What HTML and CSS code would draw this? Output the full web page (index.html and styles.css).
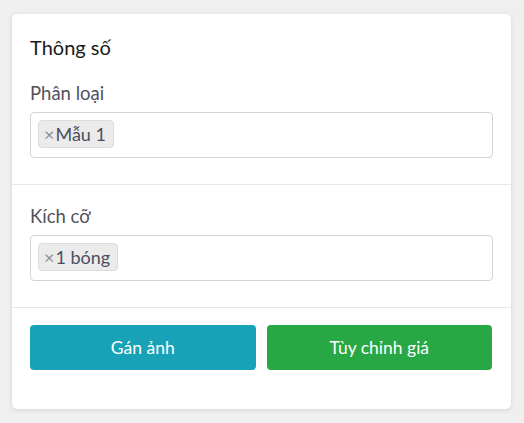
FILE: index.html
```html
<!DOCTYPE html>
<html lang="vi">
<head>
    <meta charset="UTF-8">
    <meta name="viewport" content="width=device-width, initial-scale=1.0">
    <title>Thông số</title>
    <link rel="stylesheet" href="styles.css">
</head>
<body>
    <div class="card">
        <div class="section">
            <h2>Thông số</h2>
            <label class="field-label">Phân loại</label>
            <div class="tag-input">
                <span class="tag"><span class="tag-remove">×</span>Mẫu 1</span>
            </div>
        </div>

        <div class="section">
            <label class="field-label">Kích cỡ</label>
            <div class="tag-input">
                <span class="tag"><span class="tag-remove">×</span>1 bóng</span>
            </div>
        </div>

        <div class="section actions">
            <button class="btn btn-info">Gán ảnh</button>
            <button class="btn btn-success">Tùy chỉnh giá</button>
        </div>
    </div>
</body>
</html>
```

FILE: styles.css
```css
* {
    margin: 0;
    padding: 0;
    box-sizing: border-box;
    font-family: Lato, 'Open Sans', sans-serif;
}
body {
    background-color: #efefef;
    padding: 14px 13px 14px 12px;
}
.card {
    background: #fff;
    border-radius: 5px;
    box-shadow: 0 1px 4px rgba(0, 0, 0, 0.12);
    padding-bottom: 39px;
}
.section {
    padding: 19px 18px 26px;
    border-bottom: 1px solid #e6e6e6;
}
.section h2 {
    font-size: 20px;
    font-weight: normal;
    line-height: 28px;
    color: #1a1a1a;
    margin-bottom: 20px;
}
.field-label {
    display: block;
    font-size: 18.5px;
    line-height: 24px;
    color: #54505c;
    margin-bottom: 7px;
}
.tag-input {
    height: 46px;
    border: 1px solid #ced4da;
    border-radius: 4px;
    padding: 7px;
    display: flex;
    align-items: flex-start;
}
.tag {
    display: inline-flex;
    align-items: center;
    height: 28px;
    padding: 0 7px 0 5px;
    background: #ebebeb;
    border: 1px solid #dcdcdc;
    border-radius: 4px;
    font-size: 18px;
    color: #4a5060;
}
.tag-remove {
    font-size: 18px;
    color: #8f8f8f;
    margin-right: 1px;
}
.actions {
    display: flex;
    gap: 11px;
    padding: 17px 19px 0 18px;
    border-bottom: none;
}
.btn {
    flex: 1;
    height: 45px;
    border: none;
    border-radius: 4px;
    color: #fff;
    font-size: 17.5px;
    font-family: Lato, 'Open Sans', sans-serif;
}
.btn-info {
    background-color: #17a2b8;
}
.btn-success {
    background-color: #28a745;
}
```
